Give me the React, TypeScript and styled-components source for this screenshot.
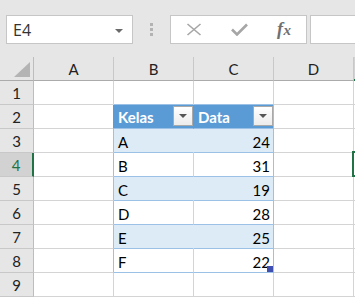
import React from 'react';
import styled, { createGlobalStyle, css } from 'styled-components';

const columns = ['A', 'B', 'C', 'D', 'E'];
const tableRows: [string, number][] = [
  ['A', 24],
  ['B', 31],
  ['C', 19],
  ['D', 28],
  ['E', 25],
  ['F', 22],
];
const rowCount = 9;
const activeRow = 4;
const activeCol = 4;

const grid = '#d4d4d4';
const tableLine = '#9bc2e6';
const tableHead = '#5b9bd5';
const band = '#ddebf7';
const green = '#217346';

const inTable = (r: number, c: number) => r >= 2 && r <= 8 && (c === 1 || c === 2);

const cellStyle = (r: number, c: number) => {
  let fill = '#ffffff';
  if (inTable(r, c)) fill = r === 2 ? tableHead : r % 2 === 1 ? band : '#ffffff';

  let bottom = grid;
  if ((c === 1 || c === 2) && r >= 1 && r <= 8) bottom = tableLine;

  let right = grid;
  if (c === 0 && r >= 2 && r <= 8) right = r === 2 ? tableHead : tableLine;
  if (c === 1 && r >= 2 && r <= 8) right = r === 2 ? tableHead : r % 2 === 1 ? band : grid;
  if (c === 2 && r >= 2 && r <= 8) right = tableLine;

  return { fill, bottom, right };
};

const App: React.FC = () => {
  const body: React.ReactNode[] = [];
  for (let r = 1; r <= rowCount; r++) {
    body.push(
      <RowHead key={`h${r}`} $active={r === activeRow}>
        {r}
      </RowHead>
    );
    columns.forEach((_, c) => {
      const s = cellStyle(r, c);
      let content: React.ReactNode = null;
      let align: 'left' | 'right' = 'left';
      if (r === 2 && c === 1) content = <><HeadText>Kelas</HeadText><FilterButton><Caret /></FilterButton></>;
      if (r === 2 && c === 2) content = <><HeadText>Data</HeadText><FilterButton><Caret /></FilterButton></>;
      if (r >= 3 && r <= 8 && c === 1) content = tableRows[r - 3][0];
      if (r >= 3 && r <= 8 && c === 2) {
        content = tableRows[r - 3][1];
        align = 'right';
      }
      body.push(
        <Cell
          key={`${r}-${c}`}
          $fill={s.fill}
          $bottom={s.bottom}
          $right={s.right}
          $align={align}
          $head={r === 2 && inTable(r, c)}
          $active={r === activeRow && c === activeCol}
        >
          {content}
          {r === 8 && c === 2 && <ResizeHandle />}
        </Cell>
      );
    });
  }

  return (
    <>
      <GlobalStyle />
      <Toolbar>
        <NameBox>
          <span>E4</span>
          <NameCaret />
        </NameBox>
        <Grip>
          <i />
          <i />
          <i />
        </Grip>
        <FuncBox>
          <svg width="16" height="13" viewBox="0 0 16 13">
            <path d="M1.5 1 L14.5 12 M14.5 1 L1.5 12" stroke="#a6a6a6" strokeWidth="1.6" fill="none" />
          </svg>
          <svg width="17" height="13" viewBox="0 0 17 13">
            <path d="M1 6.5 L6 11.5 L16 1.5" stroke="#a6a6a6" strokeWidth="2.6" fill="none" />
          </svg>
          <Fx>
            f<span>x</span>
          </Fx>
        </FuncBox>
        <FormulaBox />
      </Toolbar>
      <Sheet>
        <Corner>
          <svg width="34" height="23" viewBox="0 0 34 23">
            <polygon points="30,5 30,20 14,20" fill="#b4b4b4" />
          </svg>
        </Corner>
        {columns.map((col, c) => (
          <ColHead key={col} $active={c === activeCol}>
            {c === activeCol ? null : col}
          </ColHead>
        ))}
        {body}
      </Sheet>
    </>
  );
};

export default App;

const GlobalStyle = createGlobalStyle`
  html, body {
    margin: 0;
    padding: 0;
    background: #ffffff;
    overflow: hidden;
  }
  body {
    width: 355px;
    height: 297px;
  }
`;

const Toolbar = styled.div`
  display: flex;
  align-items: flex-start;
  height: 57px;
  padding: 15px 0 0 6px;
  box-sizing: border-box;
  background: #e6e6e6;
  overflow: hidden;
  font-family: 'Open Sans', 'Liberation Sans', sans-serif;

  & > * {
    flex-shrink: 0;
  }
`;

const boxBase = css`
  box-sizing: border-box;
  height: 29px;
  background: #ffffff;
  border: 1px solid #c6c6c6;
`;

const NameBox = styled.div`
  ${boxBase};
  width: 127px;
  display: flex;
  align-items: center;
  justify-content: space-between;
  padding: 0 9px 0 6px;
  font-size: 16px;
  color: #333333;
`;

const NameCaret = styled.div`
  width: 0;
  height: 0;
  border-left: 4px solid transparent;
  border-right: 4px solid transparent;
  border-top: 4px solid #6a6a6a;
  margin-top: 2px;
`;

const Grip = styled.div`
  width: 37px;
  height: 29px;
  display: flex;
  flex-direction: column;
  align-items: center;
  justify-content: center;
  gap: 2px;

  i {
    display: block;
    width: 3px;
    height: 3px;
    background: #b3b3b3;
  }
`;

const FuncBox = styled.div`
  ${boxBase};
  width: 137px;
  display: flex;
  align-items: center;
  padding: 0 0 0 15px;
  gap: 29px;
`;

const Fx = styled.span`
  font-family: 'Liberation Serif', serif;
  font-style: italic;
  font-weight: bold;
  font-size: 18px;
  color: #707070;
  margin-top: -1px;
  letter-spacing: 0.5px;

  span {
    font-size: 15px;
  }
`;

const FormulaBox = styled.div`
  ${boxBase};
  width: 80px;
  margin-left: 3px;
`;

const Sheet = styled.div`
  display: grid;
  grid-template-columns: 34px repeat(4, 80px) 1fr;
  grid-auto-rows: 24px;
  background: #ffffff;
  font-family: Lato, 'Liberation Sans', sans-serif;
  font-size: 15px;
  color: #000000;
`;

const Corner = styled.div`
  box-sizing: border-box;
  background: #e6e6e6;
  border-right: 1px solid #bdbdbd;
  border-bottom: 1px solid #ababab;

  svg {
    display: block;
  }
`;

const ColHead = styled.div<{ $active?: boolean }>`
  box-sizing: border-box;
  display: flex;
  align-items: center;
  justify-content: center;
  padding-top: 1px;
  background: ${p => (p.$active ? '#d2d2d2' : '#e6e6e6')};
  color: ${p => (p.$active ? green : '#222222')};
  border-right: 1px solid #c8c8c8;
  border-bottom: 1px solid ${p => (p.$active ? green : '#ababab')};
  box-shadow: ${p => (p.$active ? `inset 0 -1px 0 ${green}` : 'none')};
`;

const RowHead = styled.div<{ $active?: boolean }>`
  box-sizing: border-box;
  display: flex;
  align-items: center;
  justify-content: center;
  padding-top: 1px;
  background: ${p => (p.$active ? '#d2d2d2' : '#e6e6e6')};
  color: ${p => (p.$active ? green : '#222222')};
  border-right: ${p => (p.$active ? `2px solid ${green}` : '1px solid #bdbdbd')};
  border-bottom: 1px solid #c8c8c8;
`;

const Cell = styled.div<{
  $fill: string;
  $bottom: string;
  $right: string;
  $align: 'left' | 'right';
  $head?: boolean;
  $active?: boolean;
}>`
  position: relative;
  box-sizing: border-box;
  display: flex;
  align-items: center;
  justify-content: ${p => (p.$align === 'right' ? 'flex-end' : 'flex-start')};
  padding: 2px 3px 0 4px;
  background: ${p => p.$fill};
  border-right: 1px solid ${p => p.$right};
  border-bottom: 1px solid ${p => p.$bottom};
  color: ${p => (p.$head ? '#ffffff' : '#000000')};
  font-weight: ${p => (p.$head ? 700 : 400)};
  white-space: nowrap;

  ${p =>
    p.$head &&
    css`
      justify-content: space-between;
      align-items: flex-start;
      padding: 0 0 0 4px;
    `}

  ${p =>
    p.$active &&
    css`
      &::before {
        content: '';
        position: absolute;
        left: -2px;
        top: -2px;
        width: 90px;
        height: 26px;
        border: 2px solid ${green};
        box-sizing: border-box;
      }
    `}
`;

const HeadText = styled.span`
  margin-top: 3px;
`;

const FilterButton = styled.div`
  box-sizing: border-box;
  width: 20px;
  height: 20px;
  margin-top: 1px;
  display: flex;
  align-items: center;
  justify-content: center;
  background: linear-gradient(#ffffff, #ececec);
  border: 1px solid #a9a9a9;
`;

const Caret = styled.div`
  width: 0;
  height: 0;
  border-left: 4px solid transparent;
  border-right: 4px solid transparent;
  border-top: 4px solid #555555;
`;

const ResizeHandle = styled.div`
  position: absolute;
  right: 0;
  bottom: 0;
  width: 6px;
  height: 6px;
  background: #3f4fb0;
`;
